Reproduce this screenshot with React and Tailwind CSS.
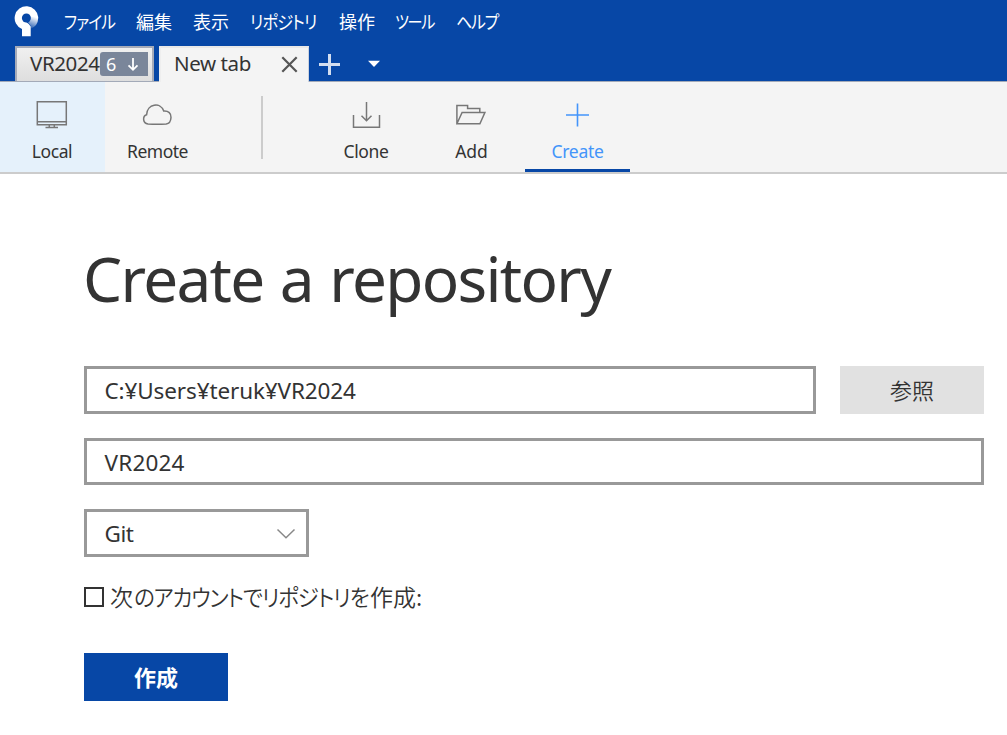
const latin = "font-['Noto_Sans','Noto_Sans_CJK_JP',sans-serif]";
const japanese = "font-['Noto_Sans_CJK_JP','Noto_Sans',sans-serif]";

const menus = [
  { label: 'ファイル', box: 'w-[72px]', text: 'tracking-[-0.9px] scale-x-[0.87]' },
  { label: '編集', box: 'w-[57px]', text: '' },
  { label: '表示', box: 'w-[57px]', text: '' },
  { label: 'リポジトリ', box: 'w-[89px]', text: 'tracking-[-1px] scale-x-[0.905]' },
  { label: '操作', box: 'w-[56px]', text: '' },
  { label: 'ツール', box: 'w-[61px]', text: 'tracking-[-1.6px] scale-x-[0.84]' },
  { label: 'ヘルプ', box: 'w-[60px]', text: 'tracking-[-1.2px] scale-x-[0.88]' },
];

function Logo() {
  return (
    <svg className="ml-[14px] mr-[25px] mt-[6px] h-[31px] w-[25px] shrink-0" viewBox="0 0 25 31">
      <defs>
        <linearGradient id="logoFade" gradientUnits="userSpaceOnUse" x1="21" y1="11" x2="17" y2="22">
          <stop offset="0" stopColor="#fff" />
          <stop offset="1" stopColor="#fff" stopOpacity="0.15" />
        </linearGradient>
      </defs>
      <path d="M14 11 24.2 11V12A11.8 11.8 0 0 1 16.5 22.8V19.5L14 16Z" fill="url(#logoFade)" />
      <path d="M24.2 11A11.8 11.8 0 1 0 8 23V30.3H16.7V20.5Q16 18.5 12.4 16.3L16.5 11Z" fill="#fff" />
      <circle cx="12.4" cy="12" r="4.5" fill="#0747a6" />
    </svg>
  );
}

function LocalIcon() {
  return (
    <svg className="mr-px h-[30px] w-[32px]" viewBox="0 0 32 30" fill="none" stroke="#777" strokeWidth="1.5">
      <path d="M1.3 1.7H30.3V24.7H1.3ZM1.3 21.7H30.3M13.3 24.7V27M18.3 24.7V27M9.5 27.5H22" />
    </svg>
  );
}

function CloudIcon() {
  return (
    <svg className="h-[30px] w-[32px]" viewBox="0 0 32 30" fill="none" stroke="#777" strokeWidth="1.5">
      <path d="M6 24C.6 23.3 .3 16.2 4.6 14.7C5 3.6 18.6 1.6 21.7 11C26.5 10.6 29.3 13.6 29 17.5C28.8 21.3 26.8 23.7 24.2 24Q15 24.4 6 24Z" />
    </svg>
  );
}

function CloneIcon() {
  return (
    <svg className="h-[30px] w-[32px]" viewBox="0 0 32 30" fill="none" stroke="#777" strokeWidth="1.5">
      <path d="M2.5 15V27.2H28.5V15M15.5 2V20.5M10.5 15.7L15.5 20.7L20.5 15.7" />
    </svg>
  );
}

function FolderIcon() {
  return (
    <svg className="h-[30px] w-[32px]" viewBox="0 0 32 30" fill="none" stroke="#777" strokeWidth="1.5">
      <path d="M.9 23.8V5.5H11.6V8.5H23.8V12.5M.9 23.8L6.1 12.5H28.9L23.9 23.8Z" />
    </svg>
  );
}

function CreateIcon() {
  return (
    <svg className="h-[30px] w-[32px]" viewBox="0 0 32 30" fill="none" stroke="#4394fa" strokeWidth="1.6">
      <path d="M4 15H27M15.5 3.5V26.5" />
    </svg>
  );
}

function Tool({ icon, label, box = '', text = '' }) {
  return (
    <button className={`flex h-[90px] w-[105px] shrink-0 flex-col items-center pt-[18px] ${box}`}>
      {icon}
      <span className={`mt-[9px] text-[17.5px] leading-[24px] whitespace-nowrap ${text}`}>{label}</span>
    </button>
  );
}

export default function App() {
  return (
    <div className={`h-[735px] w-[1007px] overflow-hidden bg-white text-[#333] ${latin}`}>
      <header className="flex h-[82px] flex-col border-b border-[#a3aab8] bg-[#0747a6]">
        <nav className={`flex h-[46px] shrink-0 text-[18px] leading-[42px] text-white ${japanese}`}>
          <Logo />
          {menus.map((m) => (
            <span
              key={m.label}
              className={`shrink-0 origin-left whitespace-nowrap [font-feature-settings:'palt'] ${m.box} ${m.text}`}
            >
              {m.label}
            </span>
          ))}
        </nav>
        <div className="flex h-[36px] shrink-0 pl-[15px]">
          <div className="flex h-[35px] w-[139px] shrink-0 border-2 border-b-0 border-[#a6abb8] bg-linear-to-b from-[#f0f0f0] to-[#dedede] pl-[13px]">
            <span className="w-[70px] text-[20.5px] leading-[31px] tracking-[-0.4px] whitespace-nowrap">VR2024</span>
            <span className="mt-[4px] flex h-[24px] w-[48px] shrink-0 items-center rounded-l-[3px] bg-[#7a869a] pl-[6px] text-[18px] leading-[24px] text-white">
              6
              <svg className="ml-[11px] h-[16px] w-[12px]" viewBox="0 0 12 16" fill="none" stroke="white" strokeWidth="1.8">
                <path d="M6 2V14M1.5 9.3L6 13.8L10.5 9.3" />
              </svg>
            </span>
          </div>
          <div className="ml-[5px] flex h-[36px] w-[150px] shrink-0 items-start border-2 border-r-1 border-b-0 border-r-[#cbd2df] border-l-[#eee] border-t-[#e8e8e8] bg-[#f4f4f4] pl-[13px]">
            <span className="w-[107px] text-[20.5px] leading-[31px] tracking-[-0.4px] whitespace-nowrap">New tab</span>
            <svg className="mt-[8px] h-[17px] w-[17px]" viewBox="0 0 17 17" stroke="#555" strokeWidth="2.2">
              <path d="M1.3 1.3L15.7 15.7M15.7 1.3L1.3 15.7" />
            </svg>
          </div>
          <svg className="mt-[8px] ml-[10px] h-[21px] w-[21px]" viewBox="0 0 21 21" stroke="#d3def0" strokeWidth="3">
            <path d="M0 10.5H21M10.5 0V21" />
          </svg>
          <svg className="mt-[14px] ml-[28px] h-[8px] w-[13px]" viewBox="0 0 13 8" fill="white">
            <path d="M0 .8H12L6 7Z" />
          </svg>
        </div>
      </header>

      <div className="flex h-[92px] border-b-2 border-[#ccc] bg-[#f4f4f4]">
        <Tool icon={<LocalIcon />} label="Local" box="bg-[#e5f1fb]" text="mr-px tracking-[-0.4px]" />
        <Tool icon={<CloudIcon />} label="Remote" text="tracking-[-0.5px]" />
        <div className="mt-[14px] mr-[51px] ml-[51px] h-[63px] w-[2px] shrink-0 bg-[#ccc]" />
        <Tool icon={<CloneIcon />} label="Clone" text="mr-px tracking-[-0.35px]" />
        <Tool icon={<FolderIcon />} label="Add" />
        <Tool icon={<CreateIcon />} label="Create" box="ml-px border-b-3 border-[#0747a6]" text="text-[#4394fa] tracking-[-0.3px]" />
      </div>

      <main className="pt-[61px] pl-[84px]">
        <h1 className="h-[131px] text-[62px] leading-[86px] tracking-[-1.7px] [word-spacing:2px] whitespace-nowrap -indent-[1px]">Create a repository</h1>
        <div className="flex gap-[24px]">
          <div className="h-[48px] w-[732px] border-3 border-[#999] pl-[17.5px] text-[22.5px] leading-[44px] tracking-[-0.12px] whitespace-nowrap">
            C:¥Users¥teruk¥VR2024
          </div>
          <button className={`h-[48px] w-[144px] bg-[#e1e1e1] pb-[3px] text-[22px] leading-[44px] font-[350] ${japanese}`}>参照</button>
        </div>
        <div className="mt-[24px] h-[47px] w-[900px] border-3 border-[#999] pl-[17.5px] text-[22.5px] leading-[44px] tracking-[0.2px]">VR2024</div>
        <div className="mt-[24px] flex h-[48px] w-[225px] justify-between border-3 border-[#999] pr-[10px] pl-[17.5px] text-[22.5px] leading-[44px] tracking-[-0.5px]">
          Git
          <svg className="mt-[16px] h-[12px] w-[20px]" viewBox="0 0 20 12" fill="none" stroke="#888" strokeWidth="1.5">
            <path d="M1.5 1.5L10 9.7L18.5 1.5" />
          </svg>
        </div>
        <label className="mt-[23px] flex h-[34px] items-center">
          <span className="h-[20px] w-[20px] border-2 border-[#333]" />
          <span className={`mb-[2px] ml-[6px] flex text-[23px] leading-[32px] font-[350] whitespace-nowrap [font-feature-settings:'palt'] ${japanese}`}>
            <span className="w-[24px]">次</span>
            <span className="w-[236px] origin-left scale-x-[0.935] tracking-[-1.2px]">のアカウントでリポジトリを</span>
            <span>作成:</span>
          </span>
        </label>
        <button className={`mt-[39px] block h-[48px] w-[144px] bg-[#0747a6] pb-[3px] text-[22px] leading-[44px] font-bold text-white ${japanese}`}>作成</button>
      </main>
    </div>
  );
}
